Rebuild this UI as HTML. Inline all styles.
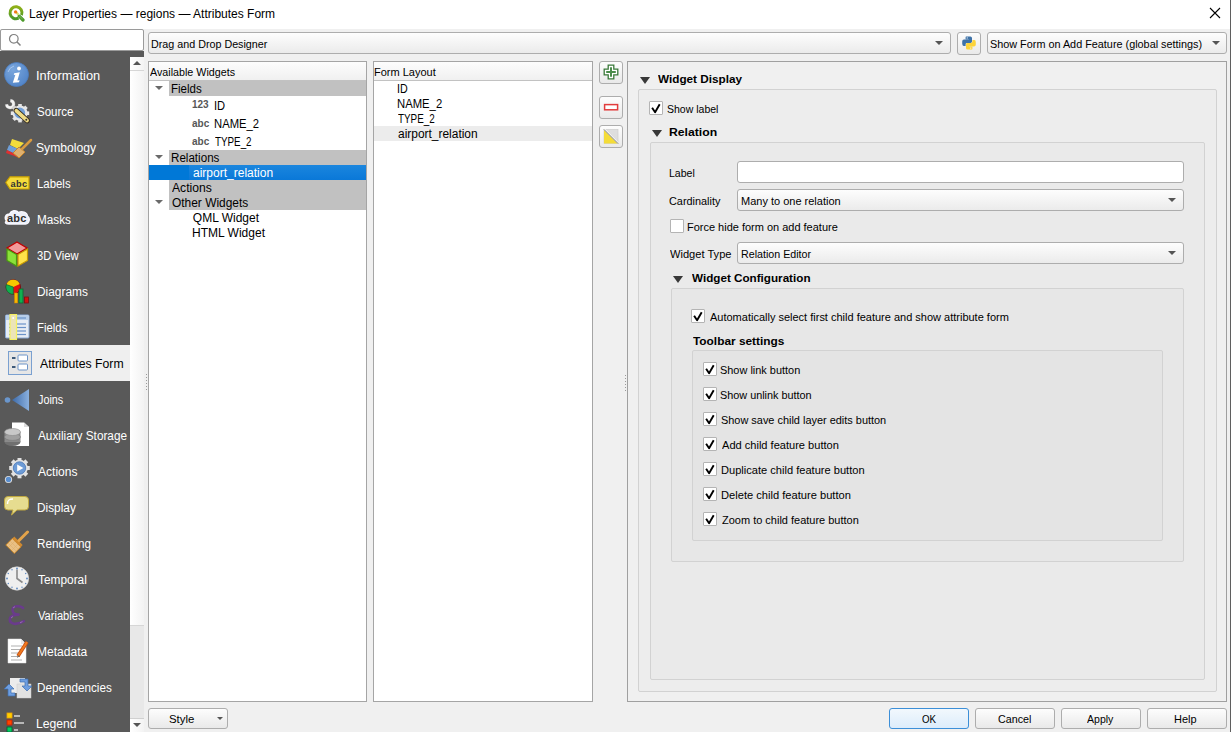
<!DOCTYPE html>
<html><head><meta charset="utf-8"><style>
*{margin:0;padding:0;box-sizing:border-box}
html,body{width:1231px;height:732px;overflow:hidden}
body{background:#f0f0f0;font-family:"Liberation Sans",sans-serif;font-size:12px;color:#000;position:relative}
.a{position:absolute}
.t{position:absolute;white-space:nowrap;line-height:1;font-size:12px;transform:scaleX(0.91);transform-origin:0 0}
.s{position:absolute;white-space:nowrap;line-height:1;font-size:12px}
.tb{position:absolute;white-space:nowrap;line-height:1;font-size:12px;font-weight:bold}
.combo{position:absolute;border:1px solid #adadad;border-radius:3px;background:linear-gradient(#fdfdfd,#ebebeb)}
.btn{position:absolute;border:1px solid #adadad;border-radius:3px;background:linear-gradient(#fdfdfd,#e9e9e9)}
.arr{position:absolute;width:0;height:0;border-left:4px solid transparent;border-right:4px solid transparent;border-top:4px solid #555}
.panel{position:absolute;border:1px solid #a5a5a5;background:#fff}
.hdr{position:absolute;left:0;top:0;right:0;height:19px;border-bottom:1px solid #c2c2c2;background:linear-gradient(#fdfdfd,#f0f0f0)}
.tri{position:absolute;width:0;height:0;border-left:4px solid transparent;border-right:4px solid transparent;border-top:4px solid #6a6a6a}
.gtri{position:absolute;width:0;height:0;border-left:5px solid transparent;border-right:5px solid transparent;border-top:7px solid #383838}
.cb{position:absolute;width:14px;height:14px;border:1px solid #b4b4b4;border-radius:1px;background:#fff}
.cb svg{position:absolute;left:-1px;top:-1px}
.gb{position:absolute;border:1px solid #d2d2d2;border-radius:2px}
.side{position:absolute;left:0;width:130px;height:36px}
.side .t{left:37px;top:13px;font-size:12px;color:#fff;transform:none}
.side svg{position:absolute;left:5px;top:6px}
.grey{position:absolute;background:#c1c1c1;height:15px}
</style></head><body>

<div class="a" style="left:0;top:0;width:1231px;height:29px;background:#fff"></div>
<svg class="a" style="left:7px;top:4px" width="18" height="18" viewBox="0 0 18 18">
<defs><linearGradient id="qg" x1="0" y1="0" x2="0" y2="1"><stop offset="0" stop-color="#90b018"/><stop offset="1" stop-color="#4a9828"/></linearGradient></defs>
<path d="M11.6 14.2 A6 6 0 1 1 14.5 11.2" fill="none" stroke="url(#qg)" stroke-width="3"/>
<path d="M12.2 12.2 L16 16" stroke="#4c9a2a" stroke-width="3.2" stroke-linecap="round"/>
<path d="M12.4 12 L15.2 14.8" stroke="#6cb048" stroke-width="1.2" stroke-linecap="round"/>
<path d="M9.4 8.6 L11.6 10.8" stroke="#d8e070" stroke-width="2.2"/>
<circle cx="8.6" cy="7.9" r="1.7" fill="#f07818"/>
</svg>
<div class="s" style="left:29px;top:8px">Layer Properties — regions — Attributes Form</div>
<svg class="a" style="left:1209px;top:7px" width="12" height="12" viewBox="0 0 12 12"><path d="M1 1L11 11M11 1L1 11" stroke="#000" stroke-width="1.1"/></svg>
<div class="a" style="left:1230px;top:0;width:1px;height:732px;background:#5f5f5f"></div>
<div class="a" style="left:0;top:29px;width:144px;height:22px;border:1px solid #9a9a9a;border-radius:2px;background:#fff"></div>
<svg class="a" style="left:8px;top:33px" width="14" height="14" viewBox="0 0 14 14"><circle cx="5.8" cy="5.8" r="4.3" fill="none" stroke="#808080" stroke-width="1.2"/><path d="M8.8 8.8L12.5 12.5" stroke="#808080" stroke-width="1.5"/></svg>
<div class="a" style="left:0;top:51px;width:144px;height:6px;background:#595959"></div>
<div class="a" style="left:0;top:57px;width:130px;height:675px;background:#595959"></div>
<div id="sidebar">
<div class="side" style="top:57px"><svg style="left:4px;top:5px" width="30" height="26" viewBox="0 0 30 26"><defs><radialGradient id="gi" cx="0.35" cy="0.3" r="0.8"><stop offset="0" stop-color="#7aa7de"/><stop offset="1" stop-color="#4f82c6"/></radialGradient></defs>
<circle cx="12.5" cy="12.5" r="12" fill="url(#gi)" stroke="#4a7cc0" stroke-width="0.8"/>
<path d="M4 10 A9 9 0 0 1 10 4" stroke="#a9c6ee" stroke-width="1" fill="none"/>
<circle cx="15" cy="6.5" r="1.9" fill="#fff"/>
<path d="M10.2 11.2 L15.8 10.2 L13.4 18.6 L15.6 18.3 L15 20.3 L8.8 20.8 L11.4 12.8 L9.8 12.9 Z" fill="#fff"/></svg><div class="t" style="left:36.43px;color:#fff;transform:scaleX(1.0690);transform-origin:0 0">Information</div></div>
<div class="side" style="top:93px"><svg style="left:4px;top:5px" width="30" height="26" viewBox="0 0 30 26"><g fill="#e6e6e6"><circle cx="16" cy="15.2" r="7.6"/><rect x="14.2" y="6" width="3.6" height="3.6" transform="rotate(0 16 15.2)"/><rect x="14.2" y="6" width="3.6" height="3.6" transform="rotate(45 16 15.2)"/><rect x="14.2" y="6" width="3.6" height="3.6" transform="rotate(90 16 15.2)"/><rect x="14.2" y="6" width="3.6" height="3.6" transform="rotate(135 16 15.2)"/><rect x="14.2" y="6" width="3.6" height="3.6" transform="rotate(180 16 15.2)"/><rect x="14.2" y="6" width="3.6" height="3.6" transform="rotate(225 16 15.2)"/><rect x="14.2" y="6" width="3.6" height="3.6" transform="rotate(270 16 15.2)"/><rect x="14.2" y="6" width="3.6" height="3.6" transform="rotate(315 16 15.2)"/></g>
<circle cx="15.8" cy="15" r="5.4" fill="#72a0d8"/>
<path d="M6.4 2.6 A3.5 3.5 0 1 1 2.6 6.4" fill="none" stroke="#8a8a8a" stroke-width="3.6"/>
<path d="M6.4 2.6 A3.5 3.5 0 1 1 2.6 6.4" fill="none" stroke="#f2f2f2" stroke-width="2.6"/>
<path d="M8.6 8.6 L12.5 12.5" stroke="#d4d4d4" stroke-width="3"/>
<path d="M12.2 12.6 L23.2 22.6" stroke="#3a3020" stroke-width="5.4" stroke-linecap="round"/>
<path d="M12.4 12.8 L23 22.4" stroke="#eedb84" stroke-width="3.8" stroke-linecap="round"/>
<circle cx="22.3" cy="21.7" r="1" fill="#333"/></svg><div class="t" style="left:36.54px;color:#fff;transform:scaleX(0.9595);transform-origin:0 0">Source</div></div>
<div class="side" style="top:129px"><svg style="left:4px;top:8px" width="30" height="26" viewBox="0 0 30 26"><path d="M8 2 L20 6 L14 12 L6 8 Z" fill="#f3dc3a"/>
<path d="M5 8 L14 12 L11 17 L3 13 Z" fill="#6f9fd8"/>
<path d="M3 13 L11 17 L16 21 L2 16 Z" fill="#e03030"/>
<path d="M15 10 L9 16 L15 21 L21 15 Z" fill="#deb070" stroke="#c8862a" stroke-width="1"/>
<path d="M18 12 L27 3" stroke="#d89a40" stroke-width="2.5" stroke-linecap="round"/></svg><div class="t" style="left:36.49px;color:#fff;transform:scaleX(1.0138);transform-origin:0 0">Symbology</div></div>
<div class="side" style="top:165px"><svg style="left:5px;top:11px" width="30" height="26" viewBox="0 0 30 26"><path d="M0.8 6.5 L5 0.8 L24 0.8 L24 13 L5 13 Z" fill="#f6dc3c" stroke="#c8a000" stroke-width="1.2"/>
<text x="5.6" y="10.6" font-family="Liberation Sans" font-weight="bold" font-size="9.2" letter-spacing="0.35" fill="#333">abc</text></svg><div class="t" style="left:36.55px;color:#fff;transform:scaleX(0.9500);transform-origin:0 0">Labels</div></div>
<div class="side" style="top:201px"><svg style="left:4px;top:8px" width="30" height="26" viewBox="0 0 30 26"><path d="M2.5 12 C0 9 1.5 5 5.5 5 C7 1.5 12 0.5 14.5 3.5 C18 1.5 23 3.5 23.5 7 C26.5 9 25.5 14.5 21.5 15 L5 15 C1.5 15 0.5 13.5 2.5 12 Z" fill="#eef0f8" stroke="#f8f8ff" stroke-width="1.4"/>
<text x="3" y="13" font-family="Liberation Sans" font-weight="bold" font-size="11" letter-spacing="0.2" fill="#2e2e2e">abc</text></svg><div class="t" style="left:36.52px;color:#fff;transform:scaleX(0.9788);transform-origin:0 0">Masks</div></div>
<div class="side" style="top:237px"><svg style="left:5px;top:4px" width="30" height="26" viewBox="0 0 30 26"><path d="M12 1 L22 7 L12 13 L2 7 Z" fill="#f29a9a" stroke="#c00000" stroke-width="1.3"/>
<path d="M2 8 L11.5 13.5 L11.5 25 L2 19.5 Z" fill="#8be23a" stroke="#4a9a10" stroke-width="1.2"/>
<path d="M22.5 8 L13 13.5 L13 25 L22.5 19.5 Z" fill="#ffe24a" stroke="#c89a00" stroke-width="1.2"/></svg><div class="t" style="left:36.57px;color:#fff;transform:scaleX(0.9341);transform-origin:0 0">3D View</div></div>
<div class="side" style="top:273px"><svg style="left:5px;top:6px" width="30" height="26" viewBox="0 0 30 26"><circle cx="8.3" cy="8" r="7.2" fill="#e21010" stroke="#7a1010" stroke-width="1"/>
<path d="M8.3 8 L1.4 5.5 A7.2 7.2 0 0 1 14.8 5 Z" fill="#f6c800"/>
<path d="M8.3 8 L1.4 5.5 A7.2 7.2 0 0 0 8.3 15.2 Z" fill="#10b050" stroke="#0a6a30" stroke-width="0.6"/>
<rect x="9.5" y="14" width="3.2" height="10" fill="#f5b800" stroke="#d08000" stroke-width="0.5"/>
<rect x="14" y="10" width="4" height="14" fill="#10b050" stroke="#0a6a30" stroke-width="0.8"/>
<rect x="19.5" y="18" width="4" height="6" fill="#d01010" stroke="#7a1010" stroke-width="0.8"/></svg><div class="t" style="left:36.51px;color:#fff;transform:scaleX(0.9900);transform-origin:0 0">Diagrams</div></div>
<div class="side" style="top:309px"><svg style="left:5px;top:5px" width="30" height="26" viewBox="0 0 30 26"><rect x="0.5" y="1" width="23.5" height="23" rx="1" fill="#e6ecf4" stroke="#8aaad6" stroke-width="1"/>
<rect x="1" y="1.5" width="22.5" height="4.5" fill="#b6cde8"/>
<g stroke="#6a92c8" stroke-width="1.2"><path d="M4 4 H21"/><path d="M4 10 H21"/><path d="M4 13.5 H21"/><path d="M4 17 H21"/><path d="M4 20.5 H21"/></g>
<rect x="5" y="0.5" width="6.5" height="25" fill="#ece4b8" stroke="#f6f060" stroke-width="1.2"/>
<circle cx="8.2" cy="4" r="1" fill="#fff"/></svg><div class="t" style="left:36.55px;color:#fff;transform:scaleX(0.9484);transform-origin:0 0">Fields</div></div>
<div class="side" style="top:345px;background:#efefef"><svg style="left:8px;top:6px" width="30" height="26" viewBox="0 0 30 26"><rect x="0.5" y="0.5" width="23" height="23" fill="#e6e6e6" stroke="#7aa0d0" stroke-width="1"/>
<rect x="4" y="6" width="3.5" height="2" fill="#3e5a7a"/><rect x="4" y="15" width="3.5" height="2" fill="#3e5a7a"/>
<rect x="10" y="4" width="9.5" height="6" rx="1" fill="#fff" stroke="#6d94c8" stroke-width="1"/>
<rect x="10" y="13" width="9.5" height="6" rx="1" fill="#fff" stroke="#6d94c8" stroke-width="1"/></svg><div class="t" style="left:40.30px;color:#000;transform:scaleX(1.0198);transform-origin:0 0">Attributes Form</div></div>
<div class="side" style="top:381px"><svg style="left:4px;top:6px" width="30" height="26" viewBox="0 0 30 26"><defs><linearGradient id="gj" x1="0" x2="1"><stop offset="0" stop-color="#3d6aa8"/><stop offset="1" stop-color="#8ab0de"/></linearGradient></defs>
<circle cx="3.5" cy="13" r="2.8" fill="#6a96cc"/>
<path d="M8 13 L25 2 L25 24 Z" fill="url(#gj)"/></svg><div class="t" style="left:37.50px;color:#fff;transform:scaleX(0.9000);transform-origin:0 0">Joins</div></div>
<div class="side" style="top:417px"><svg style="left:0px;top:5px" width="30" height="26" viewBox="0 0 30 26"><path d="M12 0.5 L24 0.5 L29 5 L29 24 L12 24 Z" fill="#fff"/>
<path d="M24 0.5 L24 5 L29 5" fill="#ddd"/>
<ellipse cx="12.5" cy="20" rx="8" ry="4" fill="#707070"/>
<rect x="4.5" y="10" width="16" height="10" fill="#8a8a8a"/>
<ellipse cx="12.5" cy="15" rx="8" ry="3.4" fill="#a0a0a0" stroke="#777" stroke-width="0.6"/>
<ellipse cx="12.5" cy="10" rx="8" ry="3.5" fill="#c8c8c8" stroke="#888" stroke-width="0.6"/></svg><div class="t" style="left:37.50px;color:#fff;transform:scaleX(0.9811);transform-origin:0 0">Auxiliary Storage</div></div>
<div class="side" style="top:453px"><svg style="left:4px;top:5px" width="30" height="26" viewBox="0 0 30 26"><g fill="#e2e2e2"><circle cx="15.5" cy="10" r="8.3"/><rect x="13.5" y="-0.3" width="4" height="4" transform="rotate(0 15.5 10)"/><rect x="13.5" y="-0.3" width="4" height="4" transform="rotate(45 15.5 10)"/><rect x="13.5" y="-0.3" width="4" height="4" transform="rotate(90 15.5 10)"/><rect x="13.5" y="-0.3" width="4" height="4" transform="rotate(135 15.5 10)"/><rect x="13.5" y="-0.3" width="4" height="4" transform="rotate(180 15.5 10)"/><rect x="13.5" y="-0.3" width="4" height="4" transform="rotate(225 15.5 10)"/><rect x="13.5" y="-0.3" width="4" height="4" transform="rotate(270 15.5 10)"/><rect x="13.5" y="-0.3" width="4" height="4" transform="rotate(315 15.5 10)"/></g>
<circle cx="15.5" cy="10" r="6.2" fill="#6d9bd6" stroke="#4a78b8" stroke-width="0.8"/>
<path d="M13.2 6.6 L19.4 10 L13.2 13.4 Z" fill="#fff"/>
<circle cx="4.5" cy="21.5" r="3.6" fill="#e2e2e2"/><circle cx="4.5" cy="21.5" r="2.7" fill="#5a8fd0"/></svg><div class="t" style="left:37.50px;color:#fff;transform:scaleX(1.0051);transform-origin:0 0">Actions</div></div>
<div class="side" style="top:489px"><svg style="left:4px;top:6px" width="30" height="26" viewBox="0 0 30 26"><path d="M4 1.5 H21 A3.5 3.5 0 0 1 24.5 5 V11.5 A3.5 3.5 0 0 1 21 15 H13 L7.5 20 L9 15 H4 A3.5 3.5 0 0 1 0.5 11.5 V5 A3.5 3.5 0 0 1 4 1.5 Z" fill="#e6dc90" stroke="#c0a840" stroke-width="1"/>
<path d="M3.5 9 C3.5 5 5 4 9 4" stroke="#fff" stroke-width="1.5" fill="none"/></svg><div class="t" style="left:36.51px;color:#fff;transform:scaleX(0.9868);transform-origin:0 0">Display</div></div>
<div class="side" style="top:525px"><svg style="left:5px;top:5px" width="30" height="26" viewBox="0 0 30 26"><path d="M0.8 15 L7.5 8.3 L16 16.8 L9.3 23.5 Z" fill="#e9c085" stroke="#c8862a" stroke-width="1"/>
<g stroke="#d9a860" stroke-width="0.5" opacity="0.8"><path d="M3 13 L11 21"/><path d="M5 11 L13 19"/><path d="M4 17 L10 11"/><path d="M7 20 L13 14"/></g>
<path d="M8.2 7.6 L16.6 16" stroke="#d08a30" stroke-width="3"/>
<path d="M14 10.5 L22.5 2" stroke="#e3a34a" stroke-width="3" stroke-linecap="round"/></svg><div class="t" style="left:36.52px;color:#fff;transform:scaleX(0.9759);transform-origin:0 0">Rendering</div></div>
<div class="side" style="top:561px"><svg style="left:5px;top:5px" width="30" height="26" viewBox="0 0 30 26"><circle cx="12" cy="12.5" r="11.7" fill="#efefef" stroke="#d6d6d6" stroke-width="0.6"/>
<g fill="#5a86c0"><circle cx="12" cy="2.5" r="0.9"/><circle cx="12" cy="22.5" r="0.9"/><circle cx="2" cy="12.5" r="0.9"/><circle cx="22" cy="12.5" r="0.9"/>
<circle cx="17" cy="3.8" r="0.7"/><circle cx="20.7" cy="7.5" r="0.7"/><circle cx="20.7" cy="17.5" r="0.7"/><circle cx="17" cy="21.2" r="0.7"/><circle cx="7" cy="21.2" r="0.7"/><circle cx="3.3" cy="17.5" r="0.7"/><circle cx="3.3" cy="7.5" r="0.7"/><circle cx="7" cy="3.8" r="0.7"/></g>
<path d="M12 3.5 V12.5 L17.5 16.5" stroke="#8a8a8a" stroke-width="1.6" fill="none"/></svg><div class="t" style="left:37.50px;color:#fff;transform:scaleX(0.9898);transform-origin:0 0">Temporal</div></div>
<div class="side" style="top:597px"><svg style="left:2px;top:8px" width="30" height="26" viewBox="0 0 30 26"><path d="M21 3 C18 0.3 10.5 0.5 10.5 5 C10.5 8 13.5 9.6 16.5 9.6 M16.5 9.6 C11.5 9.6 7.8 11.2 7.8 14.6 C7.8 19.2 14.5 20.6 21.8 16.2" stroke="#6a3b8c" stroke-width="2.6" fill="none" stroke-linecap="round"/>
<path d="M11 3 L13 1.6 M9 13 L11 11.5 M18 17.8 L20.5 16.6" stroke="#a07ab8" stroke-width="0.8"/></svg><div class="t" style="left:37.50px;color:#fff;transform:scaleX(0.9245);transform-origin:0 0">Variables</div></div>
<div class="side" style="top:633px"><svg style="left:5px;top:5px" width="30" height="26" viewBox="0 0 30 26"><path d="M3 1 L16 1 L21 6 L21 25 L3 25 Z" fill="#fff" stroke="#e0e0e0" stroke-width="0.5"/>
<path d="M16 1 L16 6 L21 6" fill="#e8e8e8"/>
<g stroke="#b0b0b0" stroke-width="1"><path d="M6 8 H17"/><path d="M6 11.5 H17"/><path d="M6 15 H15"/><path d="M6 18.5 H15"/><path d="M6 22 H17"/></g>
<path d="M13 18 L22 4" stroke="#c85010" stroke-width="3.6" stroke-linecap="butt"/>
<path d="M13 18 L22 4" stroke="#f07a20" stroke-width="2" />
<path d="M12 20 L13 17 L14.5 18.3 Z" fill="#666"/></svg><div class="t" style="left:36.50px;color:#fff;transform:scaleX(1.0041);transform-origin:0 0">Metadata</div></div>
<div class="side" style="top:669px"><svg style="left:3px;top:8px" width="30" height="26" viewBox="0 0 30 26"><rect x="7" y="1" width="15" height="15" fill="#ececec"/>
<rect x="14" y="7" width="14" height="14" fill="#e2e2e2" stroke="#ccc" stroke-width="0.5"/>
<path d="M17 2 H25 V9 H29 L24 14 L19 9 H22 V5 H17 Z" fill="#6e9ee0" stroke="#3e6eb0" stroke-width="0.7"/>
<path d="M12 19 H5 V12 H1 L6 7 L11 12 H8 V16 H12 Z" fill="#6e9ee0" stroke="#3e6eb0" stroke-width="0.7"/></svg><div class="t" style="left:36.53px;color:#fff;transform:scaleX(0.9747);transform-origin:0 0">Dependencies</div></div>
<div class="side" style="top:705px"><svg style="left:5px;top:5px" width="30" height="26" viewBox="0 0 30 26"><rect x="2" y="3" width="5" height="5" fill="#ffd000" stroke="#f0a000" stroke-width="0.8"/>
<rect x="2" y="10" width="5" height="5" fill="#ff4400" stroke="#c02000" stroke-width="0.8"/>
<rect x="2" y="17" width="5" height="5" fill="#00d060" stroke="#005a30" stroke-width="0.8"/>
<path d="M9 6 H15 M9 13 H19 M9 20 H13" stroke="#b8b8b8" stroke-width="2"/></svg><div class="t" style="left:36.49px;color:#fff;transform:scaleX(1.0132);transform-origin:0 0">Legend</div></div>
</div><!--/sb-->
<div class="a" style="left:130px;top:57px;width:14px;height:675px;background:linear-gradient(90deg,#fff,#f3f3f3)"></div>
<div class="a" style="left:130px;top:70px;width:14px;height:1px;background:#d6d6d6"></div>
<div class="a" style="left:133px;top:61px;width:0;height:0;border-left:4px solid transparent;border-right:4px solid transparent;border-bottom:4px solid #555"></div>
<div class="a" style="left:130px;top:625px;width:14px;height:93px;background:#e8e8e8;border-top:1px solid #d6d6d6"></div>
<div class="a" style="left:146px;top:374px;width:1px;height:1px;background:#9a9a9a"></div><div class="a" style="left:146px;top:377px;width:1px;height:1px;background:#9a9a9a"></div><div class="a" style="left:146px;top:380px;width:1px;height:1px;background:#9a9a9a"></div><div class="a" style="left:146px;top:383px;width:1px;height:1px;background:#9a9a9a"></div><div class="a" style="left:146px;top:386px;width:1px;height:1px;background:#9a9a9a"></div><div class="a" style="left:146px;top:389px;width:1px;height:1px;background:#9a9a9a"></div><div class="a" style="left:625px;top:375px;width:1px;height:1px;background:#9a9a9a"></div><div class="a" style="left:625px;top:378px;width:1px;height:1px;background:#9a9a9a"></div><div class="a" style="left:625px;top:381px;width:1px;height:1px;background:#9a9a9a"></div><div class="a" style="left:625px;top:384px;width:1px;height:1px;background:#9a9a9a"></div><div class="a" style="left:625px;top:387px;width:1px;height:1px;background:#9a9a9a"></div><div class="a" style="left:625px;top:390px;width:1px;height:1px;background:#9a9a9a"></div>
<div class="a" style="left:130px;top:718px;width:14px;height:1px;background:#d0d0d0"></div><div class="a" style="left:133px;top:723px;width:0;height:0;border-left:4px solid transparent;border-right:4px solid transparent;border-top:4px solid #555"></div>

<div class="combo" style="left:148px;top:32px;width:803px;height:22px"></div>
<div class="t" style="left:151.07px;top:39px;font-size:11.5px;transform:scaleX(0.9333)">Drag and Drop Designer</div>
<div class="arr" style="left:935px;top:41px"></div>
<div class="btn" style="left:957px;top:32px;width:24px;height:23px"></div>
<svg class="a" style="left:962px;top:36px" width="14" height="14" viewBox="0 0 14 14">
<path d="M4.2 0.5 H8.4 Q10 0.5 10 2 V5.6 Q10 7 8.6 7 H5 Q3.6 7 3.6 8.4 V10 H1.6 Q0.2 10 0.2 7.6 V5.6 Q0.2 3.6 2 3.6 H6.8 V3.2 H3.6 V1.6 Q3.6 0.5 4.2 0.5 Z" fill="#3d72a8"/>
<circle cx="5.2" cy="1.9" r="0.6" fill="#fff"/>
<path d="M9.8 13.5 H5.6 Q4 13.5 4 12 V8.4 Q4 7 5.4 7 H9 Q10.4 7 10.4 5.6 V4 H12.4 Q13.8 4 13.8 6.4 V8.4 Q13.8 10.4 12 10.4 H7.2 V10.8 H10.4 V12.4 Q10.4 13.5 9.8 13.5 Z" fill="#fcd43a"/>
<circle cx="8.8" cy="12.1" r="0.6" fill="#fff"/>
</svg>
<div class="combo" style="left:987px;top:32px;width:240px;height:22px"></div>
<div class="t" style="left:990.46px;top:39px;font-size:11.5px;transform:scaleX(0.9424)">Show Form on Add Feature (global settings)</div>
<div class="arr" style="left:1212px;top:41px"></div>
<div class="panel" style="left:148px;top:61px;width:219px;height:641px"><div class="hdr"></div></div>
<div class="t" style="left:150.40px;top:67px;font-size:11.5px;transform:scaleX(0.9319)">Available Widgets</div>
<div class="grey" style="left:169px;top:81px;width:197px"></div>
<div class="tri" style="left:155px;top:86px"></div>
<div class="t" style="left:171.44px;top:83px;font-size:12px;transform:scaleX(0.9581)">Fields</div>
<div class="s" style="left:192px;top:100px;font-size:10px;font-weight:bold;color:#575757">123</div>
<div class="t" style="left:213.67px;top:100px;font-size:12px;transform:scaleX(0.9273)">ID</div>
<div class="s" style="left:192px;top:119px;font-size:10px;font-weight:bold;color:#575757">abc</div>
<div class="t" style="left:213.66px;top:118px;font-size:12px;transform:scaleX(0.9383)">NAME_2</div>
<div class="s" style="left:192px;top:137px;font-size:10px;font-weight:bold;color:#575757">abc</div>
<div class="t" style="left:214.60px;top:136px;font-size:12px;transform:scaleX(0.8182)">TYPE_2</div>
<div class="grey" style="left:169px;top:150px;width:197px"></div>
<div class="tri" style="left:155px;top:155px"></div>
<div class="t" style="left:171.33px;top:152px;font-size:12px;transform:scaleX(0.9673)">Relations</div>
<div class="a" style="left:149px;top:165px;width:217px;height:15px;background:#0078d7"></div>
<div class="a" style="left:189px;top:165px;width:177px;height:15px;background:linear-gradient(#1b86de,#0a78d8)"></div>
<div class="t" style="left:192.80px;top:167px;font-size:12px;transform:scaleX(1.0013);color:#fff">airport_relation</div>
<div class="grey" style="left:169px;top:180px;width:197px"></div>
<div class="t" style="left:172.30px;top:182px;font-size:12px;transform:scaleX(1.0128)">Actions</div>
<div class="grey" style="left:169px;top:195px;width:197px"></div>
<div class="tri" style="left:155px;top:200px"></div>
<div class="t" style="left:172.30px;top:197px;font-size:12px;transform:scaleX(0.9934)">Other Widgets</div>
<div class="t" style="left:192.80px;top:212px;font-size:12px;transform:scaleX(1.0000)">QML Widget</div>
<div class="t" style="left:191.80px;top:227px;font-size:12px;transform:scaleX(1.0014)">HTML Widget</div>
<div class="panel" style="left:373px;top:61px;width:220px;height:641px"><div class="hdr"></div></div>
<div class="t" style="left:374.44px;top:67px;font-size:11.5px;transform:scaleX(0.9571)">Form Layout</div>
<div class="t" style="left:396.71px;top:83px;font-size:12px;transform:scaleX(0.8909)">ID</div>
<div class="t" style="left:396.66px;top:98px;font-size:12px;transform:scaleX(0.9404)">NAME_2</div>
<div class="t" style="left:397.60px;top:113px;font-size:12px;transform:scaleX(0.8227)">TYPE_2</div>
<div class="a" style="left:374px;top:126px;width:218px;height:15px;background:#ececec"></div>
<div class="t" style="left:397.60px;top:128px;font-size:12px;transform:scaleX(0.9949)">airport_relation</div>
<div class="btn" style="left:599px;top:61px;width:24px;height:23px"></div>
<svg class="a" style="left:603px;top:64px" width="16" height="16" viewBox="0 0 16 16"><path d="M5.2 1.2H10.8V5.2H14.8V10.8H10.8V14.8H5.2V10.8H1.2V5.2H5.2Z" fill="#fff" stroke="#3a7a3a" stroke-width="1.3"/><path d="M8 3.2V12.8M3.2 8H12.8" stroke="#4a8c4a" stroke-width="2"/></svg>
<div class="btn" style="left:599px;top:96px;width:24px;height:23px"></div>
<svg class="a" style="left:603px;top:100px" width="16" height="16" viewBox="0 0 16 16"><rect x="1.6" y="4.6" width="13" height="5.2" fill="#fff" stroke="#e23c3c" stroke-width="1.5"/></svg>
<div class="btn" style="left:599px;top:125px;width:24px;height:23px"></div>
<svg class="a" style="left:603px;top:129px" width="16" height="16" viewBox="0 0 16 16"><rect x="1" y="0.5" width="14" height="14" fill="#dedede" stroke="#c8c8c8" stroke-width="0.6"/><path d="M1 0.5 L15 14.5 L1 14.5 Z" fill="#f4dc38"/><path d="M1.5 0.5 L15 14" stroke="#fff" stroke-width="1.6"/><path d="M1 0.5 L15 14.5" stroke="#555" stroke-width="0.8"/></svg>
<div class="a" style="left:627px;top:61px;width:600px;height:641px;border:1px solid #a0a0a0;background:#f0f0f0"></div>
<div class="gtri" style="left:640px;top:77px"></div>
<div class="t" style="left:658.30px;top:74px;font-size:11.5px;transform:scaleX(1.0207);font-weight:bold">Widget Display</div>
<div class="gb" style="left:638px;top:89px;width:579px;height:603px;background:#ededed"></div>
<div class="cb" style="left:649px;top:101px"><svg width="13" height="13" viewBox="0 0 13 13"><path d="M3.1 6.8 L6.1 11.3 L10.7 3.3" stroke="#000" stroke-width="1.9" fill="none" stroke-linejoin="round"/></svg></div>
<div class="t" style="left:666.99px;top:104px;font-size:11.5px;transform:scaleX(0.9145)">Show label</div>
<div class="gtri" style="left:652px;top:130px"></div>
<div class="t" style="left:669.04px;top:127px;font-size:11.5px;transform:scaleX(1.0614);font-weight:bold">Relation</div>
<div class="gb" style="left:650px;top:142px;width:555px;height:538px;background:#eaeaea"></div>
<div class="t" style="left:668.58px;top:168px;font-size:11.5px;transform:scaleX(0.9185)">Label</div>
<div class="a" style="left:737px;top:161px;width:447px;height:22px;border:1px solid #adadad;border-radius:3px;background:#fff"></div>
<div class="t" style="left:668.75px;top:196px;font-size:11.5px;transform:scaleX(0.9453)">Cardinality</div>
<div class="combo" style="left:737px;top:189px;width:447px;height:22px"></div>
<div class="t" style="left:740.94px;top:196px;font-size:11.5px;transform:scaleX(0.9563)">Many to one relation</div>
<div class="arr" style="left:1168px;top:198px"></div>
<div class="cb" style="left:670px;top:219px"></div>
<div class="t" style="left:687.25px;top:222px;font-size:11.5px;transform:scaleX(0.9548)">Force hide form on add feature</div>
<div class="t" style="left:669.50px;top:249px;font-size:11.5px;transform:scaleX(0.9651)">Widget Type</div>
<div class="combo" style="left:737px;top:242px;width:447px;height:22px"></div>
<div class="t" style="left:740.97px;top:249px;font-size:11.5px;transform:scaleX(0.9284)">Relation Editor</div>
<div class="arr" style="left:1168px;top:251px"></div>
<div class="gtri" style="left:673px;top:276px"></div>
<div class="t" style="left:691.70px;top:273px;font-size:11.5px;transform:scaleX(1.0147);font-weight:bold">Widget Configuration</div>
<div class="gb" style="left:671px;top:288px;width:513px;height:274px;background:#e7e7e7"></div>
<div class="cb" style="left:691px;top:309px"><svg width="13" height="13" viewBox="0 0 13 13"><path d="M3.1 6.8 L6.1 11.3 L10.7 3.3" stroke="#000" stroke-width="1.9" fill="none" stroke-linejoin="round"/></svg></div>
<div class="t" style="left:709.90px;top:312px;font-size:11.5px;transform:scaleX(0.9561)">Automatically select first child feature and show attribute form</div>
<div class="t" style="left:692.70px;top:336px;font-size:11.5px;transform:scaleX(1.0318);font-weight:bold">Toolbar settings</div>
<div class="gb" style="left:692px;top:350px;width:471px;height:191px;background:#e4e4e4"></div>
<div class="cb" style="left:703px;top:362px"><svg width="13" height="13" viewBox="0 0 13 13"><path d="M3.1 6.8 L6.1 11.3 L10.7 3.3" stroke="#000" stroke-width="1.9" fill="none" stroke-linejoin="round"/></svg></div>
<div class="t" style="left:720.35px;top:365px;font-size:11.5px;transform:scaleX(0.9506)">Show link button</div>
<div class="cb" style="left:703px;top:387px"><svg width="13" height="13" viewBox="0 0 13 13"><path d="M3.1 6.8 L6.1 11.3 L10.7 3.3" stroke="#000" stroke-width="1.9" fill="none" stroke-linejoin="round"/></svg></div>
<div class="t" style="left:720.36px;top:390px;font-size:11.5px;transform:scaleX(0.9427)">Show unlink button</div>
<div class="cb" style="left:703px;top:412px"><svg width="13" height="13" viewBox="0 0 13 13"><path d="M3.1 6.8 L6.1 11.3 L10.7 3.3" stroke="#000" stroke-width="1.9" fill="none" stroke-linejoin="round"/></svg></div>
<div class="t" style="left:720.55px;top:415px;font-size:11.5px;transform:scaleX(0.9500)">Show save child layer edits button</div>
<div class="cb" style="left:703px;top:437px"><svg width="13" height="13" viewBox="0 0 13 13"><path d="M3.1 6.8 L6.1 11.3 L10.7 3.3" stroke="#000" stroke-width="1.9" fill="none" stroke-linejoin="round"/></svg></div>
<div class="t" style="left:721.50px;top:440px;font-size:11.5px;transform:scaleX(0.9620)">Add child feature button</div>
<div class="cb" style="left:703px;top:462px"><svg width="13" height="13" viewBox="0 0 13 13"><path d="M3.1 6.8 L6.1 11.3 L10.7 3.3" stroke="#000" stroke-width="1.9" fill="none" stroke-linejoin="round"/></svg></div>
<div class="t" style="left:720.54px;top:465px;font-size:11.5px;transform:scaleX(0.9639)">Duplicate child feature button</div>
<div class="cb" style="left:703px;top:487px"><svg width="13" height="13" viewBox="0 0 13 13"><path d="M3.1 6.8 L6.1 11.3 L10.7 3.3" stroke="#000" stroke-width="1.9" fill="none" stroke-linejoin="round"/></svg></div>
<div class="t" style="left:720.53px;top:490px;font-size:11.5px;transform:scaleX(0.9677)">Delete child feature button</div>
<div class="cb" style="left:703px;top:512px"><svg width="13" height="13" viewBox="0 0 13 13"><path d="M3.1 6.8 L6.1 11.3 L10.7 3.3" stroke="#000" stroke-width="1.9" fill="none" stroke-linejoin="round"/></svg></div>
<div class="t" style="left:721.50px;top:515px;font-size:11.5px;transform:scaleX(0.9552)">Zoom to child feature button</div>
<div class="btn" style="left:148px;top:708px;width:80px;height:21px"></div>
<div class="t" style="left:168.51px;top:714px;font-size:11.5px;transform:scaleX(0.9917)">Style</div>
<div class="a" style="left:217px;top:717px;width:0;height:0;border-left:3px solid transparent;border-right:3px solid transparent;border-top:3px solid #555"></div>
<div class="a" style="left:889px;top:708px;width:80px;height:21px;border:1px solid #3c8fd8;border-radius:3px;background:linear-gradient(#f2f8fd,#dcecfb)"></div>
<div class="t" style="left:921.80px;top:714px;font-size:11.5px;transform:scaleX(0.8438)">OK</div>
<div class="btn" style="left:975px;top:708px;width:80px;height:21px"></div>
<div class="t" style="left:997.67px;top:714px;font-size:11.5px;transform:scaleX(0.9324)">Cancel</div>
<div class="btn" style="left:1061px;top:708px;width:80px;height:21px"></div>
<div class="t" style="left:1086.60px;top:714px;font-size:11.5px;transform:scaleX(0.9172)">Apply</div>
<div class="btn" style="left:1147px;top:708px;width:80px;height:21px"></div>
<div class="t" style="left:1174.35px;top:714px;font-size:11.5px;transform:scaleX(0.9545)">Help</div>
</body></html>
